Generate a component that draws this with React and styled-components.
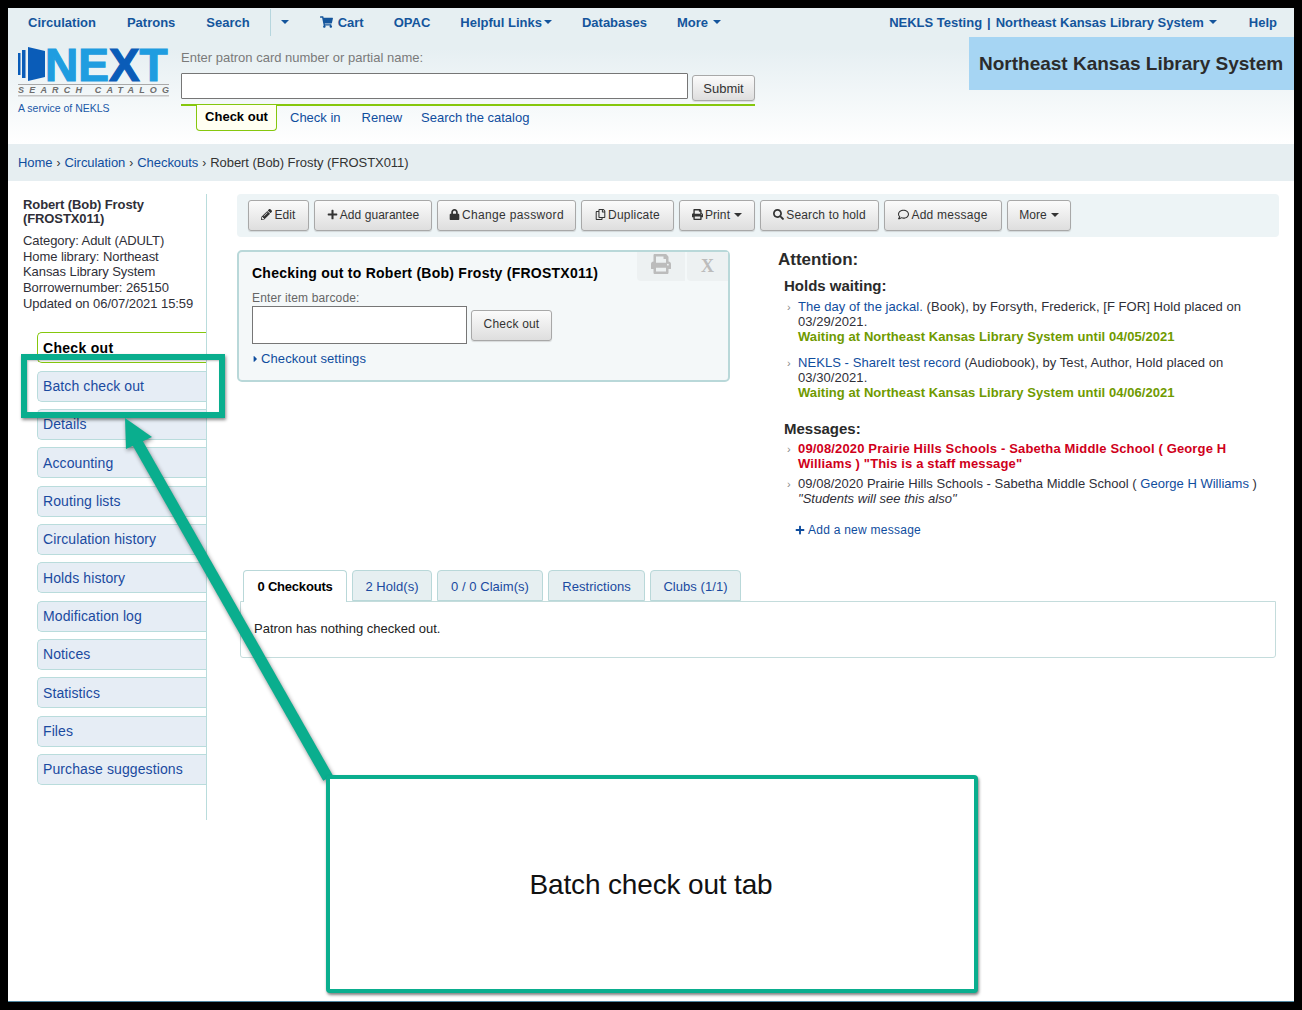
import React from "react";
import styled, { createGlobalStyle } from "styled-components";
import { FaPencilAlt, FaPlus, FaLock, FaRegCopy, FaPrint, FaSearch, FaRegComment, FaShoppingCart, FaCaretRight } from "react-icons/fa";

const Global = createGlobalStyle`
  html, body { margin: 0; padding: 0; background: #000; }
  body { font-family: "Liberation Sans", Arial, sans-serif; font-size: 13px; color: #2f2f38; }
  * { box-sizing: border-box; }
  a { color: #0f4d9e; text-decoration: none; }
`;

const Frame = styled.div`
  width: 1302px; height: 1010px; padding: 8px; background: #000; overflow: hidden;
`;
const Page = styled.div`
  position: relative; width: 1286px; height: 994px; background: #fff; border-bottom: 1px solid #4f86a0;
`;
const Header = styled.header`
  height: 136px; background: linear-gradient(#e6eff2 0%, #e6eff2 30%, #ffffff 100%);
`;
const Nav = styled.nav`
  height: 29px; display: flex; align-items: center; padding: 0 17px 1px 20px;
`;
const NavLink = styled.a`
  display: flex; align-items: center; font-weight: bold; font-size: 13px;
  color: #14559c; margin-right: ${p => p.$mr || 0}px; white-space: nowrap;
`;
const Caret = styled.span`
  display: inline-block; width: 0; height: 0; margin-left: ${p => p.$ml ?? 3}px;
  border-left: 4px solid transparent; border-right: 4px solid transparent; border-top: 4px solid ${p => p.$c || "#14559c"};
`;
const NavDivider = styled.span`
  width: 1px; height: 27px; background: #b6d6de; margin-right: 10px;
`;
const NavSpacer = styled.span` flex: 1; `;
const NavPipe = styled.span` font-weight: bold; color: #14559c; margin: 0 5px; `;
const CartIcon = styled(FaShoppingCart)` width: 13px; height: 12px; margin-right: 5px; `;

const HeaderBody = styled.div` display: flex; align-items: flex-start; `;
const LogoCol = styled.div` width: 173px; padding: 10px 0 0 10px; `;
const LogoArt = styled.svg` display: block; margin-top: -14px; `;
const ServiceNote = styled.a` display: block; font-size: 10.5px; color: #1a58a8; line-height: 13px; margin-top: 5px; `;
const SearchCol = styled.div` width: 574px; padding-top: 14px; `;
const SearchLabel = styled.label` display: block; font-size: 13px; color: #7a7a7a; height: 22px; line-height: 14px; `;
const SearchRow = styled.div` display: flex; align-items: flex-start; `;
const SearchInput = styled.input`
  width: 507px; height: 26px; border: 1px solid #767676; background: #fff; padding: 0; border-radius: 1px;
`;
const GreyButton = styled.button`
  font-family: inherit; font-size: 12px; color: #333; letter-spacing: ${p => p.$ls || 0}px; white-space: nowrap;
  display: inline-flex; align-items: center; justify-content: center; gap: 2px; padding: 0 0 2px;
  height: ${p => p.$h || 31}px; width: ${p => p.$w}px;
  background: linear-gradient(#fbfbfb, #dedede); border: 1px solid #a8a8a8; border-radius: 3px;
  box-shadow: 0 1px 1px rgba(0,0,0,.12);
  svg { width: 11px; height: 11px; color: #333; }
`;
const SubmitBtn = styled(GreyButton)` margin: 2px 0 0 4px; font-size: 13px; padding: 0; `;
const SearchTabs = styled.div`
  margin-top: 3px; display: flex; align-items: flex-start; padding-left: 15px;
  border-top: 2px solid #85c70d; border-radius: 0 0 0 4px; height: 28px;
`;
const ActiveHeadTab = styled.a`
  width: 81px; height: 26px; margin-top: -1px; color: #000; font-weight: bold; font-size: 13px;
  background: #fffff2; border: 1px solid #85c70d; border-top: 0; border-radius: 0 0 4px 4px;
  display: flex; align-items: center; justify-content: center; padding-bottom: 3px;
`;
const HeadTab = styled.a` font-size: 13px; margin: 4px 0 0 ${p => p.$ml}px; `;
const LibraryBox = styled.div`
  margin-left: auto; width: 325px; height: 53px; background: #a6d5f3; color: #2b2b2b; white-space: nowrap;
  font-size: 19px; font-weight: bold; display: flex; align-items: center; padding-left: 10px;
`;

const Breadcrumb = styled.div`
  height: 37px; background: #e6eef1; display: flex; align-items: center; padding-left: 10px; font-size: 13px; letter-spacing: -0.05px; color: #333;
`;
const Sep = styled.span` margin: 0 4px; font-size: 12px; `;

const Main = styled.div` display: flex; padding-top: 13px; align-items: flex-start; `;
const Sidebar = styled.aside`
  width: 199px; height: 626px; border-right: 1px solid #b9dcdc; flex: none;
`;
const PatronInfo = styled.div` padding: 4px 8px 0 15px; height: 138px; `;
const PatronName = styled.h5` margin: 0 0 7px; font-size: 13px; line-height: 14px; font-weight: bold; letter-spacing: -0.1px; width: 150px; `;
const PatronLine = styled.div` font-size: 13px; line-height: 15.7px; letter-spacing: -0.07px; `;
const SideTabs = styled.ul` list-style: none; margin: .3px 0 0 29px; padding: 0; display: flex; flex-direction: column; gap: 7.33px; `;
const SideTab = styled.li`
  height: 31px; display: flex; align-items: center; padding-left: 5px; font-size: 14px; letter-spacing: ${p => p.$active ? .3 : .1}px;
  border: 1px solid ${p => p.$active ? "#85c70d" : "#b9dcdc"}; border-right: 0; border-radius: 5px 0 0 5px;
  background: ${p => p.$active ? "#fff" : "#e6edf5"};
  color: ${p => p.$active ? "#000" : "#1a4aa0"}; font-weight: ${p => p.$active ? "bold" : "normal"};
`;

const Content = styled.main` width: 1042px; margin-left: 30px; `;
const Toolbar = styled.div`
  height: 43px; background: #edf4f6; border-radius: 4px; display: flex; align-items: center; gap: 5px; padding-left: 11px; margin-bottom: 13px;
`;
const TopRow = styled.div` display: flex; height: 320px; align-items: flex-start; `;
const CheckoutBox = styled.section`
  position: relative; width: 493px; height: 132px; background: #f4f8f9; border: 2px solid #b9d8d9; border-radius: 5px; padding: 12px 0 0 13px;
`;
const BoxTitle = styled.h4` margin: 0 0 9px; font-size: 14px; line-height: 18px; font-weight: bold; color: #000; letter-spacing: 0.25px; `;
const BarcodeLabel = styled.label` display: block; font-size: 12px; line-height: 14px; color: #666; letter-spacing: .15px; height: 15px; `;
const BarcodeRow = styled.div` display: flex; align-items: center; gap: 4px; `;
const BarcodeInput = styled.input` width: 215px; height: 38px; border: 1px solid #767676; background: #fff; padding: 0; `;
const SettingsLink = styled.a`
  display: flex; align-items: center; margin-top: 7px; font-size: 13px; letter-spacing: .1px;
  svg { width: 7px; height: 10px; margin: 0 2px 0 0; }
`;
const BoxActions = styled.div` position: absolute; top: 0; right: 0; display: flex; gap: 2px; `;
const BoxAction = styled.div`
  width: ${p => p.$w}px; height: 29px; background: #edf1f2; border-radius: 0 0 0 4px; color: #bcbcbc;
  display: flex; align-items: center; justify-content: center; padding-bottom: ${p => p.$pb || 0}px;
  font-family: "Liberation Serif", serif; font-weight: bold; font-size: 18px;
  svg { width: 20px; height: 20px; }
`;

const Attention = styled.section` margin-left: 48px; width: 486px; padding-top: 1px; `;
const AttnTitle = styled.h3` margin: 0 0 8px; font-size: 17px; line-height: 18px; font-weight: bold; color: #2a2a2a; `;
const AttnSub = styled.h4` margin: 0 0 ${p => p.$mb ?? 5}px 6px; font-size: 15px; line-height: 17px; font-weight: bold; color: #2a2a2a; `;
const AttnList = styled.ul` list-style: none; margin: 0 0 ${p => p.$mb || 0}px; padding: 0 0 0 20px; `;
const AttnItem = styled.li`
  position: relative; font-size: 13px; line-height: 15.2px; margin-bottom: ${p => p.$mb || 0}px; letter-spacing: ${p => p.$ls ?? 0.06}px;
  color: ${p => p.$red ? "#d0001b" : "#2f2f38"}; font-weight: ${p => p.$red ? "bold" : "normal"};
  &::before { content: "›"; position: absolute; left: -11px; top: 1px; color: #888; font-weight: normal; font-size: 11px; }
`;
const Waiting = styled.strong` display: block; color: #6f9a00; `;
const AddMessage = styled.a`
  display: flex; align-items: center; gap: 3px; margin: 17px 0 0 17px; font-size: 12px; letter-spacing: .25px;
  svg { width: 10px; height: 10px; color: #0f4d9e; }
`;

const Tabs = styled.div` display: flex; gap: 5px; margin-left: 6px; position: relative; z-index: 1; margin-bottom: -1px; `;
const Tab = styled.a`
  width: ${p => p.$w}px; height: ${p => p.$active ? 32 : 31}px; display: flex; align-items: center; justify-content: center;
  padding-top: ${p => p.$active ? 0 : 1}px;
  font-size: 13px; letter-spacing: ${p => p.$active ? -0.2 : 0.05}px; border: 1px solid #b9d8d9; border-radius: 4px 4px 0 0;
  background: ${p => p.$active ? "#fff" : "#e6eff1"}; border-bottom: ${p => p.$active ? "0" : "1px solid #b9d8d9"};
  color: ${p => p.$active ? "#000" : "#1a4aa0"}; font-weight: ${p => p.$active ? "bold" : "normal"};
`;
const Panel = styled.div`
  width: 1036px; height: 57px; margin-left: 3px; border: 1px solid #c4dcdc; border-radius: 0 0 3px 3px; padding: 19px 0 0 13px; font-size: 13px; line-height: 15px; color: #222;
`;

const Overlay = styled.svg`
  position: absolute; left: -8px; top: -8px; width: 1302px; height: 1010px; pointer-events: none;
  filter: drop-shadow(1px 2px 2px rgba(0,0,0,.45));
`;
const Highlight = styled.div`
  position: absolute; left: 13px; top: 346px; width: 204px; height: 64px; border: 6px solid #0aae8e;
  box-shadow: 1px 2px 3px rgba(0,0,0,.45), inset 1px 1px 2px rgba(0,0,0,.25);
`;
const Callout = styled.div`
  position: absolute; left: 318px; top: 767px; width: 652px; height: 218px; background: #fff; border: 4px solid #0aae8e; border-radius: 4px;
  box-shadow: 1px 2px 3px rgba(0,0,0,.5); display: flex; align-items: center; justify-content: center; padding: 2px 2px 0 0;
  font-size: 28px; letter-spacing: -0.15px; color: #111;
`;

const Logo = () => (
  <LogoArt width="152" height="64" viewBox="0 -14 152 64">
    <rect x="0" y="6" width="2.5" height="22" fill="#0a5cb8" />
    <rect x="4" y="3" width="3.5" height="28" fill="#0a5cb8" />
    <polygon points="10,0 27,4 27,30 10,34" fill="#0a5cb8" />
    <text x="27" y="34" fontFamily="Liberation Sans" fontWeight="bold" fontSize="46" strokeWidth="1.2" fill="#1f9de0" stroke="#1f9de0">
      NE<tspan fill="#0a5cb8" stroke="#0a5cb8">X</tspan>T
    </text>
    <rect x="0" y="37" width="151" height="1" fill="#a9a9a9" />
    <text x="0" y="45.5" fontFamily="Liberation Sans" fontStyle="italic" fontWeight="bold" fontSize="9" fill="#6e6e6e" textLength="151">SEARCH CATALOG</text>
    <rect x="0" y="48" width="151" height="1.5" fill="#c4c4c4" />
  </LogoArt>
);

const buttons = [
  [FaPencilAlt, "Edit", 61, false, 0.1], [FaPlus, "Add guarantee", 118, false, 0.05], [FaLock, "Change password", 139, false, 0.35], [FaRegCopy, "Duplicate", 93, false, 0.2],
  [FaPrint, "Print", 76, true, 0.1], [FaSearch, "Search to hold", 119, false, 0.15], [FaRegComment, "Add message", 118, false, 0.25], [null, "More", 64, true, 0.1],
];
const sideTabs = ["Check out", "Batch check out", "Details", "Accounting", "Routing lists", "Circulation history", "Holds history", "Modification log", "Notices", "Statistics", "Files", "Purchase suggestions"];

export default function App() {
  return (
    <Frame>
      <Global />
      <Page>
        <Header>
          <Nav>
            <NavLink $mr={31}>Circulation</NavLink>
            <NavLink $mr={31}>Patrons</NavLink>
            <NavLink $mr={20}>Search</NavLink>
            <NavDivider />
            <Caret $ml={0} style={{ marginRight: 31 }} />
            <NavLink $mr={30}><CartIcon />Cart</NavLink>
            <NavLink $mr={30}>OPAC</NavLink>
            <NavLink $mr={30}>Helpful Links<Caret $ml={2} /></NavLink>
            <NavLink $mr={30}>Databases</NavLink>
            <NavLink>More<Caret $ml={5} /></NavLink>
            <NavSpacer />
            <NavLink>NEKLS Testing</NavLink>
            <NavPipe>|</NavPipe>
            <NavLink $mr={32}>Northeast Kansas Library System<Caret $ml={5} /></NavLink>
            <NavLink>Help</NavLink>
          </Nav>
          <HeaderBody>
            <LogoCol>
              <Logo />
              <ServiceNote>A service of NEKLS</ServiceNote>
            </LogoCol>
            <SearchCol>
              <SearchLabel>Enter patron card number or partial name:</SearchLabel>
              <SearchRow>
                <SearchInput />
                <SubmitBtn $w={63} $h={26}>Submit</SubmitBtn>
              </SearchRow>
              <SearchTabs>
                <ActiveHeadTab>Check out</ActiveHeadTab>
                <HeadTab $ml={13}>Check in</HeadTab>
                <HeadTab $ml={21}>Renew</HeadTab>
                <HeadTab $ml={19}>Search the catalog</HeadTab>
              </SearchTabs>
            </SearchCol>
            <LibraryBox>Northeast Kansas Library System</LibraryBox>
          </HeaderBody>
        </Header>
        <Breadcrumb>
          <a>Home</a><Sep>›</Sep><a>Circulation</a><Sep>›</Sep><a>Checkouts</a><Sep>›</Sep>Robert (Bob) Frosty (FROSTX011)
        </Breadcrumb>
        <Main>
          <Sidebar>
            <PatronInfo>
              <PatronName>Robert (Bob) Frosty (FROSTX011)</PatronName>
              <PatronLine>Category: Adult (ADULT)</PatronLine>
              <PatronLine>Home library: Northeast Kansas Library System</PatronLine>
              <PatronLine>Borrowernumber: 265150</PatronLine>
              <PatronLine>Updated on 06/07/2021 15:59</PatronLine>
            </PatronInfo>
            <SideTabs>
              {sideTabs.map((t, i) => <SideTab key={t} $active={i === 0}>{t}</SideTab>)}
            </SideTabs>
          </Sidebar>
          <Content>
            <Toolbar>
              {buttons.map(([Icon, label, w, caret, ls]) => (
                <GreyButton key={label} $w={w} $ls={ls}>
                  {Icon && <Icon />}{label}{caret && <Caret $c="#333" $ml={2} />}
                </GreyButton>
              ))}
            </Toolbar>
            <TopRow>
              <CheckoutBox>
                <BoxActions>
                  <BoxAction $w={48} $pb={5}><FaPrint /></BoxAction>
                  <BoxAction $w={41}>X</BoxAction>
                </BoxActions>
                <BoxTitle>Checking out to Robert (Bob) Frosty (FROSTX011)</BoxTitle>
                <BarcodeLabel>Enter item barcode:</BarcodeLabel>
                <BarcodeRow>
                  <BarcodeInput />
                  <GreyButton $w={81} $ls={0.2}>Check out</GreyButton>
                </BarcodeRow>
                <SettingsLink><FaCaretRight />Checkout settings</SettingsLink>
              </CheckoutBox>
              <Attention>
                <AttnTitle>Attention:</AttnTitle>
                <AttnSub>Holds waiting:</AttnSub>
                <AttnList $mb={20}>
                  <AttnItem $mb={10}>
                    <a>The day of the jackal.</a> (Book), by Forsyth, Frederick, [F FOR] Hold placed on 03/29/2021.
                    <Waiting>Waiting at Northeast Kansas Library System until 04/05/2021</Waiting>
                  </AttnItem>
                  <AttnItem>
                    <a>NEKLS - ShareIt test record</a> (Audiobook), by Test, Author, Hold placed on 03/30/2021.
                    <Waiting>Waiting at Northeast Kansas Library System until 04/06/2021</Waiting>
                  </AttnItem>
                </AttnList>
                <AttnSub $mb={4}>Messages:</AttnSub>
                <AttnList>
                  <AttnItem $red $mb={4} $ls={0.15}>09/08/2020 Prairie Hills Schools - Sabetha Middle School ( George H Williams ) "This is a staff message"</AttnItem>
                  <AttnItem $ls={0.02}>09/08/2020 Prairie Hills Schools - Sabetha Middle School ( <a>George H Williams</a> )<br /><i>"Students will see this also"</i></AttnItem>
                </AttnList>
                <AddMessage><FaPlus />Add a new message</AddMessage>
              </Attention>
            </TopRow>
            <Tabs>
              <Tab $w={104} $active>0 Checkouts</Tab>
              <Tab $w={80}>2 Hold(s)</Tab>
              <Tab $w={106}>0 / 0 Claim(s)</Tab>
              <Tab $w={97}>Restrictions</Tab>
              <Tab $w={91}>Clubs (1/1)</Tab>
            </Tabs>
            <Panel>Patron has nothing checked out.</Panel>
          </Content>
        </Main>
        <Highlight />
        <Overlay viewBox="0 0 1302 1010">
          <polygon points="125,418 152,437 126,449" fill="#0aae8e" />
          <line x1="137" y1="442" x2="328" y2="778" stroke="#0aae8e" strokeWidth="11" />
        </Overlay>
        <Callout>Batch check out tab</Callout>
      </Page>
    </Frame>
  );
}
